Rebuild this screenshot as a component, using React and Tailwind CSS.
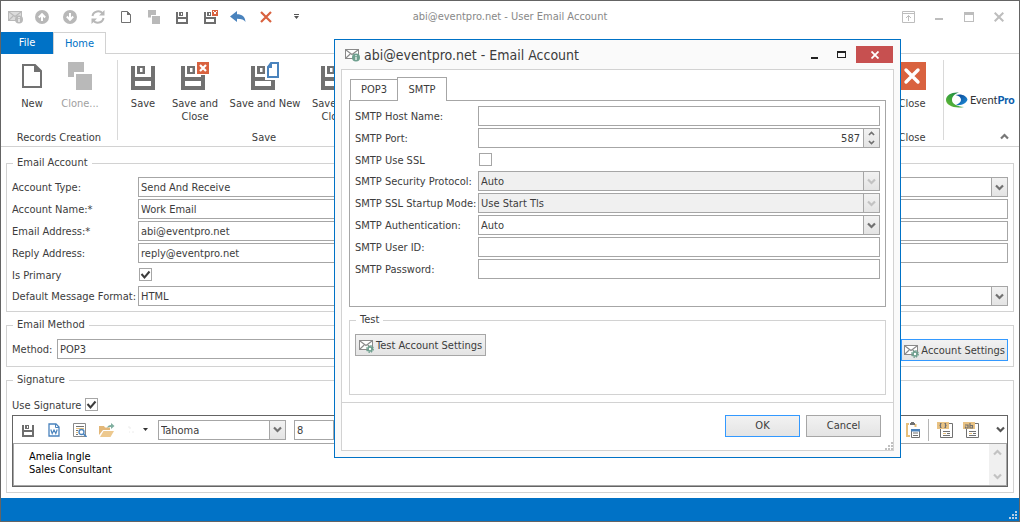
import { useState } from "react";
import { clsx } from "clsx";

/* ---------- icons ---------- */

function Chevron({ up, className }) {
  return (
    <svg viewBox="0 0 9 7" className={clsx("h-[7px] w-[9px]", className)} aria-hidden="true">
      <path
        d={up ? "M1 5.5 4.5 2 8 5.5" : "M1 1.5 4.5 5 8 1.5"}
        fill="none"
        stroke="currentColor"
        strokeWidth="2.2"
      />
    </svg>
  );
}

function MailIcon({ badge = "gear", muted, className }) {
  const line = muted ? "#b9b9b9" : "#8a8a8a";
  const mark = muted ? "#b9b9b9" : "#6fa08f";
  return (
    <svg viewBox="0 0 15 14" className={clsx("h-[14px] w-[15px] shrink-0", className)} aria-hidden="true">
      <rect x="0.5" y="1.5" width="13" height="9" fill={muted ? "#dcdcdc" : "#fff"} stroke={line} />
      <path d="M1 2 7 6.5 13 2M1 10l4.2-4M13 10 8.8 6" fill="none" stroke={line} strokeWidth="1.1" />
      {badge === "gear" ? (
        <>
          <circle cx="11" cy="10" r="3.2" fill="none" stroke={mark} strokeWidth="1.4" strokeDasharray="1.5 1" />
          <circle cx="11" cy="10" r="2" fill="#fff" stroke={mark} strokeWidth="1.6" />
        </>
      ) : (
        <>
          <circle cx="11" cy="9.5" r="4" fill={mark} />
          <path d="M11 7v1.2M11 9v3" stroke="#fff" strokeWidth="1.2" />
        </>
      )}
    </svg>
  );
}

function RoundArrow({ down }) {
  return (
    <svg viewBox="0 0 14 14" className="size-[14px]" aria-hidden="true">
      <circle cx="7" cy="7" r="7" fill="#b8b8b8" />
      <path
        d={down ? "M7 3v5.5M3.8 6.5 7 9.8l3.2-3.3" : "M7 11V5.5M3.8 7.5 7 4.2l3.2 3.3"}
        fill="none"
        stroke="#fff"
        strokeWidth="2"
      />
    </svg>
  );
}

function RefreshIcon() {
  return (
    <svg viewBox="0 0 14 14" className="size-[14px]" fill="none" stroke="#b8b8b8" strokeWidth="2" aria-hidden="true">
      <path d="M1.5 6A5.6 5.6 0 0 1 11.8 4M12.5 8A5.6 5.6 0 0 1 2.2 10" />
      <path d="M13.5 0v5.5H8zM.5 14V8.5H6z" fill="#b8b8b8" stroke="none" />
    </svg>
  );
}

function PageIcon({ className }) {
  return (
    <svg viewBox="0 0 20 24" className={className} aria-hidden="true">
      <path d="M1 1h12l6 6v16H1z" fill="#fff" stroke="#717171" strokeWidth="2" />
      <path d="M12 1h1l6 6v1h-7z" fill="#717171" />
    </svg>
  );
}

function CloneIcon({ className }) {
  return (
    <svg viewBox="0 0 24 28" className={className} aria-hidden="true">
      <path d="M0 0h16v10H6v5H0z" fill="#b9b9b9" />
      <path d="M8 12h16v16H8z" fill="#b9b9b9" />
    </svg>
  );
}

function SaveIcon({ extra }) {
  return (
    <svg
      viewBox={extra ? "0 0 28 28" : "0 0 24 28"}
      className={extra ? "size-7" : "h-7 w-6"}
      aria-hidden="true"
    >
      <g fill="#717171">
        <path d="M0 4h4v11h16V4h4v24H0zM4 19v5h16v-5z" fillRule="evenodd" />
        <path d="M6 4h8v8H6zM9 6v4h2.5V6z" fillRule="evenodd" />
      </g>
      {extra === "close" && (
        <>
          <path d="M15 0h13v13H15z" fill="#fff" />
          <path d="M16 0h12v12H16z" fill="#d9623f" />
          <path d="m19 3 6 6m0-6-6 6" stroke="#fff" strokeWidth="2.2" />
        </>
      )}
      {extra === "new" && (
        <>
          <path d="M14 0h14v18H14z" fill="#fff" />
          <path d="M20 1h7v14H17V5z" fill="#fff" stroke="#4a83bd" strokeWidth="2" />
          <path d="M16 5l4-4h1v5h-5z" fill="#4a83bd" />
        </>
      )}
    </svg>
  );
}

function SmallSaveIcon({ close }) {
  return (
    <svg viewBox="0 0 14 14" className="size-[14px]" shapeRendering="crispEdges" aria-hidden="true">
      <path d="M0 2h2v5h8V2h2v12H0zM2 9v3h8V9z" fill="#6e6e6e" fillRule="evenodd" />
      <path d="M3 2h4v4H3zM5 3v2h1V3z" fill="#6e6e6e" fillRule="evenodd" />
      {close && (
        <>
          <path d="M7 0h7v7H7z" fill="#fff" />
          <path d="M8 0h6v6H8z" fill="#d9623f" />
          <path d="m9.5 1.5 3 3m0-3-3 3" stroke="#fff" />
        </>
      )}
    </svg>
  );
}

function SizeGrip({ className }) {
  return (
    <svg viewBox="0 0 8 8" className={clsx("size-2", className)} shapeRendering="crispEdges" aria-hidden="true">
      <path d="M6 0h2v2H6zM3 3h2v2H3zM6 3h2v2H6zM0 6h2v2H0zM3 6h2v2H3zM6 6h2v2H6z" fill="currentColor" />
    </svg>
  );
}

function EventProMark() {
  return (
    <svg viewBox="0 0 22 16" className="h-4 w-[22px] shrink-0" aria-hidden="true">
      <defs>
        <linearGradient id="markGreen" x1="0" y1="1" x2="1" y2="0">
          <stop offset="0" stopColor="#6cbd34" />
          <stop offset="0.6" stopColor="#2c9a3f" />
          <stop offset="1" stopColor="#0d6b4f" />
        </linearGradient>
        <linearGradient id="markBlue" x1="0" y1="0" x2="1" y2="1">
          <stop offset="0" stopColor="#0a3f8f" />
          <stop offset="1" stopColor="#1e93dd" />
        </linearGradient>
      </defs>
      <path d="M13 .5C6-.3 0 3 0 8c0 5 8 9 18 7C11 14.5 6 12 6 8c0-3.600 2.500-6 7-7.500z" fill="url(#markGreen)" />
      <path d="M9.5 3C16 1.300 20.500 4 21.500 7.500 20.500 11 16 13.800 10 13c3.500-1.500 5-3.300 5-5.300C15 5.500 13 3.800 9.500 3z" fill="url(#markBlue)" />
    </svg>
  );
}

/* ---------- form parts ---------- */

const boxBorder = "border border-[#a6a6a6]";
const buttonFace = "bg-linear-to-b from-[#f2f2f2] to-[#e4e4e4]";

function TextField({ id, className, ...props }) {
  return (
    <input
      id={id}
      className={clsx("h-5 min-w-0 flex-1 bg-white px-[2px] outline-none", boxBorder, className)}
      {...props}
    />
  );
}

function SelectField({ id, options, disabled, className, ...props }) {
  return (
    <div className={clsx("relative h-5 min-w-0", boxBorder, disabled ? "bg-[#f0f0f0]" : "bg-white", className)}>
      <select
        id={id}
        disabled={disabled}
        className="block h-full w-full appearance-none pt-[2px] pr-5 pl-[2px] opacity-100 outline-none"
        {...props}
      >
        {options.map((o) => (
          <option key={o}>{o}</option>
        ))}
      </select>
      <span
        className={clsx(
          "pointer-events-none absolute inset-y-0 right-0 flex w-4 items-center justify-center border-l border-[#a6a6a6]",
          buttonFace,
          disabled ? "text-[#c2c2c2]" : "text-[#717171]"
        )}
      >
        <Chevron />
      </span>
    </div>
  );
}

function CheckBox({ id, ...props }) {
  return (
    <span className="grid">
      <input
        id={id}
        type="checkbox"
        className={clsx("peer col-start-1 row-start-1 size-[13px] appearance-none bg-white", boxBorder)}
        {...props}
      />
      <svg
        viewBox="0 0 13 13"
        className="pointer-events-none invisible col-start-1 row-start-1 size-[13px] peer-checked:visible"
        aria-hidden="true"
      >
        <path d="m2.5 6 3 3.500 5-6" fill="none" stroke="#3c3c3c" strokeWidth="2" />
      </svg>
    </span>
  );
}

function Row({ label, htmlFor, labelWidth, height = "h-5", children, className }) {
  return (
    <div className={clsx("flex items-center", height, className)}>
      <label htmlFor={htmlFor} className={clsx("shrink-0 pt-[2px] whitespace-nowrap", labelWidth)}>
        {label}
      </label>
      {children}
    </div>
  );
}

function Group({ title, children, bottom = "pb-[5px]", className }) {
  return (
    <fieldset className={clsx("min-w-0 border border-[#d2d2d2] px-[5px]", bottom, className)}>
      <legend className="ml-px px-1 leading-4">{title}</legend>
      <div className="pt-[6px]">{children}</div>
    </fieldset>
  );
}

/* ---------- title bar and ribbon ---------- */

const quickActions = [
  { name: "Email account", icon: <MailIcon badge="info" muted />, gap: "mr-3" },
  { name: "Previous", icon: <RoundArrow />, gap: "mr-[14px]" },
  { name: "Next", icon: <RoundArrow down />, gap: "mr-[14px]" },
  { name: "Refresh", icon: <RefreshIcon />, gap: "mr-4" },
  { name: "New", icon: <PageIcon className="h-3 w-[10px]" />, gap: "mr-[17px]" },
  { name: "Clone", icon: <CloneIcon className="h-[14px] w-3" />, gap: "mr-4" },
  { name: "Save", icon: <SmallSaveIcon />, gap: "mr-[14px]" },
  { name: "Save and close", icon: <SmallSaveIcon close />, gap: "mr-3" },
  {
    name: "Undo",
    icon: (
      <svg viewBox="0 0 16 12" className="h-3 w-4" aria-hidden="true">
        <path d="M0 5.500 7 0v3.300c5 0 8 2 8.500 7.700C14 8.500 11.500 7.700 7 7.700V11z" fill="#4a83bd" />
      </svg>
    ),
    gap: "mr-[14px]",
  },
  {
    name: "Delete",
    icon: (
      <svg viewBox="0 0 12 12" className="size-3" aria-hidden="true">
        <path d="m1 1 10 10M11 1 1 11" stroke="#d9623f" strokeWidth="2.2" />
      </svg>
    ),
    gap: "mr-[22px]",
  },
  {
    name: "Customize",
    icon: (
      <svg viewBox="0 0 5 5" className="size-[5px]" aria-hidden="true">
        <path d="M0 0h5v1H0zM0 2h5L2.500 5z" fill="#555" />
      </svg>
    ),
  },
];

function TitleBar() {
  return (
    <header className="relative flex h-[31px] items-center justify-between pr-[15px] pl-[7px]">
      <div className="flex items-center">
        {quickActions.map((a) => (
          <button key={a.name} type="button" aria-label={a.name} className={a.gap}>
            {a.icon}
          </button>
        ))}
      </div>
      <h1 className="pointer-events-none absolute inset-x-0 top-2 text-center text-[#888]">
        abi@eventpro.net - User Email Account
      </h1>
      <div className="flex items-center text-[#bdbdbd]">
        <button type="button" aria-label="Collapse ribbon" className="mr-5">
          <svg viewBox="0 0 13 12" className="h-3 w-[13px]" fill="none" stroke="currentColor" aria-hidden="true">
            <path d="M.5.500h12v11H.5zM.5 2.500h12M6.500 10V4.500M4 7l2.500-2.500L9 7" />
          </svg>
        </button>
        <button type="button" aria-label="Minimize" className="mr-[21px]">
          <svg viewBox="0 0 8 12" className="h-3 w-2" aria-hidden="true">
            <path d="M0 7h8v2H0z" fill="currentColor" />
          </svg>
        </button>
        <button type="button" aria-label="Maximize" className="mr-5">
          <svg viewBox="0 0 10 10" className="size-[10px]" aria-hidden="true">
            <path d="M0 0h10v10H0zM1 3v6h8V3z" fill="currentColor" fillRule="evenodd" />
          </svg>
        </button>
        <button type="button" aria-label="Close window">
          <svg viewBox="0 0 10 10" className="size-[10px]" aria-hidden="true">
            <path d="m.7.700 8.600 8.600M9.300.700.700 9.300" stroke="currentColor" strokeWidth="2" />
          </svg>
        </button>
      </div>
    </header>
  );
}

function RibbonButton({ icon, label, disabled, className }) {
  return (
    <button
      type="button"
      disabled={disabled}
      className={clsx("flex flex-col items-center leading-[13px]", disabled && "text-[#a0a0a0]", className)}
    >
      <span className="mb-[7px] flex h-7 items-center">{icon}</span>
      {label}
    </button>
  );
}

function RibbonGroup({ caption, children, className }) {
  return (
    <section className={clsx("flex shrink-0 flex-col justify-between pt-[2px]", className)}>
      <div className="flex items-start">{children}</div>
      <h2 className="text-center leading-4">{caption}</h2>
    </section>
  );
}

function Divider() {
  return <span className="h-20 w-px shrink-0 bg-[#d9d9d9]" />;
}

function Ribbon() {
  return (
    <div>
      <nav className="flex h-[22px]">
        <button type="button" className="h-full w-[52px] bg-[#0072c6] text-white">
          File
        </button>
        <button type="button" className="w-[53px] border border-b-0 border-[#d2d2d2] text-[#0072c6]">
          Home
        </button>
        <span className="flex-1 border-b border-[#d2d2d2]" />
      </nav>
      <div className="flex h-[93px] border-b border-[#d2d2d2] pt-[6px]">
        <RibbonGroup caption="Records Creation" className="w-[116px]">
          <RibbonButton label="New" icon={<PageIcon className="h-6 w-5" />} className="ml-[7px] w-12" />
          <RibbonButton
            label="Clone..."
            disabled
            icon={<CloneIcon className="h-7 w-6" />}
            className="w-12"
          />
        </RibbonGroup>
        <Divider />
        <RibbonGroup caption="Save" className="w-[292px]">
          <RibbonButton label="Save" icon={<SaveIcon />} className="ml-[5px] w-10" />
          <RibbonButton
            label={<>Save and<br />Close</>}
            icon={<SaveIcon extra="close" />}
            className="ml-1 w-14"
          />
          <RibbonButton label="Save and New" icon={<SaveIcon extra="new" />} className="w-[84px]" />
          <RibbonButton
            label={<>Save and<br />Close</>}
            icon={<SaveIcon extra="close" />}
            className="w-14"
          />
        </RibbonGroup>
        <div className="flex-1" />
        <RibbonGroup caption="Close" className="w-[62px]">
          <RibbonButton
            label="Close"
            icon={
              <svg viewBox="0 0 28 28" className="size-7" aria-hidden="true">
                <path d="M0 0h28v28H0z" fill="#d9623f" />
                <path d="m8 8 12 12M20 8 8 20" stroke="#fff" strokeWidth="3.4" strokeLinecap="round" />
              </svg>
            }
            className="mx-auto"
          />
        </RibbonGroup>
        <Divider />
        <div className="flex w-[75px] flex-col justify-between pt-8 pb-[6px] pl-[2px]">
          <a href="#eventpro" className="flex items-center gap-[2px] font-['Lato',sans-serif] text-[#333]">
            <EventProMark />
            <span>
              Event<b className="font-black text-[#0a5cab]">Pro</b>
            </span>
          </a>
          <button type="button" aria-label="Collapse" className="mr-[10px] self-end text-[#777]">
            <Chevron up />
          </button>
        </div>
      </div>
    </div>
  );
}

/* ---------- signature editor ---------- */

function EditorToolbar() {
  return (
    <div className="flex h-7 items-center border-b border-[#a6a6a6]">
      <button type="button" aria-label="Save" className="ml-[9px]">
        <SmallSaveIcon />
      </button>
      <button type="button" aria-label="Export to Word" className="ml-3">
        <svg viewBox="0 0 12 14" className="h-[14px] w-3" aria-hidden="true">
          <path d="M1 1h7l3 3v9H1z" fill="#fff" stroke="#4a83bd" strokeWidth="1.3" />
          <path d="M7.500 1v3.500H11" fill="none" stroke="#4a83bd" />
          <path d="m2.800 6.500 1.400 4L6 7l1.800 3.500 1.400-4" fill="none" stroke="#4a83bd" strokeWidth="1.2" />
        </svg>
      </button>
      <button type="button" aria-label="Preview" className="ml-[13px]">
        <svg viewBox="0 0 14 14" className="size-[14px]" fill="none" aria-hidden="true">
          <path d="M.5.500h12v13H.5z" fill="#fff" stroke="#8a8a8a" />
          <path d="M3 3.500h8M3 7.500h2M3 11.500h2" stroke="#717171" />
          <path d="M3 5.500h8M3 9.500h2" stroke="#e7bf7a" />
          <circle cx="8.5" cy="9" r="2.5" fill="#fff" stroke="#4a83bd" strokeWidth="1.3" />
          <path d="m10.500 11 3 3" stroke="#4a83bd" strokeWidth="1.6" />
        </svg>
      </button>
      <button type="button" aria-label="Open" className="ml-3">
        <svg viewBox="0 0 16 14" className="h-[14px] w-4" aria-hidden="true">
          <path d="M0 3h5l1 1.500h5V7H4l-4 5z" fill="#e3b778" />
          <path d="M4.500 8H15l-3.500 6H1z" fill="#edc98f" />
          <path d="M8 5c.5-2 2-3 4-3V0l3.500 3L12 6V4c-2 0-3 0-4 1z" fill="#7fae9f" />
        </svg>
      </button>
      <button type="button" disabled aria-label="Insert" className="ml-3">
        <svg viewBox="0 0 8 10" className="h-[10px] w-2" aria-hidden="true">
          <path d="M1 2h2v2M2 7h1M5 7h2" fill="none" stroke="#ececec" />
        </svg>
      </button>
      <button type="button" aria-label="More" className="mr-[10px] ml-2">
        <svg viewBox="0 0 5 3" className="h-[3px] w-[5px]" aria-hidden="true">
          <path d="M0 0h5L2.500 3z" fill="#333" />
        </svg>
      </button>
      <SelectField aria-label="Font" options={["Tahoma", "Arial"]} className="w-32" />
      <SelectField aria-label="Font size" options={["8", "9", "10"]} className="ml-2 w-14" />
      <div className="flex-1" />
      <button type="button" aria-label="Paste special">
        <svg viewBox="0 0 16 16" className="size-4" aria-hidden="true">
          <path d="M4 2H2v12h3M10.500 2v3" fill="none" stroke="#e7bf7a" strokeWidth="2" />
          <path d="M5 1h1V0h3v1h1v2H5z" fill="#717171" />
          <path d="M6.500 8v7.500h8V8z" fill="#fff" stroke="#717171" />
          <path d="M6 7h9v2.500H6z" fill="#4a83bd" />
          <path d="M8 11h5M8 13.500h5" stroke="#717171" />
        </svg>
      </button>
      <span className="mr-2 ml-[7px] h-[22px] w-px bg-[#b5b5b5]" />
      {["{}", "ab"].map((mark) => (
        <button key={mark} type="button" aria-label="Field codes" className="mr-2">
          <svg viewBox="0 0 18 18" className="size-[18px]" aria-hidden="true">
            <path d="M3.500 6v10.500h12v-14H11" fill="#fff" stroke="#717171" />
            <path d="M0 1h12v7H0z" fill="#e9c283" />
            {mark === "{}" ? (
              <path d="M4.500 2.500h-1v4h1M2.500 4.500h1M7.500 2.500h1v4h-1M8.500 4.500h1" fill="none" stroke="#717171" strokeWidth="1.2" />
            ) : (
              <path d="M2 4h3v3H2.500V5.500M7 2v5h2.500V4.500H7" fill="none" stroke="#717171" strokeWidth="1.2" />
            )}
            <path d="M6 10.500h7M10 12.500h3M6 14.500h7" stroke="#717171" />
            <path d="M6 12.500h3" stroke="#e7bf7a" />
          </svg>
        </button>
      ))}
      <button type="button" aria-label="More tools" className="mr-[2px] ml-[7px] text-[#555]">
        <Chevron />
      </button>
    </div>
  );
}

/* ---------- SMTP dialog ---------- */

function EmailAccountDialog() {
  const [tab, setTab] = useState("SMTP");
  const [port, setPort] = useState(587);
  const wide = "w-[123px]";

  return (
    <div
      role="dialog"
      aria-label="Email Account"
      className="absolute top-[38px] right-[118px] left-[333px] border border-[#0072c6] bg-[#fafafa] px-[6px] pb-[6px]"
    >
      <div className="flex h-[29px] items-center">
        <MailIcon badge="info" className="mr-1 ml-1" />
        <h2 className="flex-1 pt-px text-[14px] leading-5">abi@eventpro.net - Email Account</h2>
        <button type="button" aria-label="Minimize dialog" className="mr-[19px]">
          <svg viewBox="0 0 7 8" className="h-2 w-[7px]" aria-hidden="true">
            <path d="M0 6h7v2H0z" fill="#222" />
          </svg>
        </button>
        <button type="button" aria-label="Maximize dialog" className="mr-[10px]">
          <svg viewBox="0 0 9 7" className="h-[7px] w-[9px]" aria-hidden="true">
            <path d="M0 0h9v7H0zM1 2v4h7V2z" fill="#222" fillRule="evenodd" />
          </svg>
        </button>
        <button
          type="button"
          aria-label="Close dialog"
          className="mr-px flex h-[17px] w-[37px] items-center justify-center bg-[#c75050]"
        >
          <svg viewBox="0 0 8 8" className="size-2" aria-hidden="true">
            <path d="m.5.500 7 7M7.500.500l-7 7" stroke="#fff" strokeWidth="1.8" />
          </svg>
        </button>
      </div>

      <div className="border border-[#d2d2d2] bg-white">
        <div className="p-[7px]">
          <div role="tablist" className="flex items-end pl-px">
            {["POP3", "SMTP"].map((t) => (
              <button
                key={t}
                type="button"
                role="tab"
                aria-selected={tab === t}
                onClick={() => setTab(t)}
                className={clsx(
                  "border border-b-0 border-[#a6a6a6] bg-white",
                  tab === t ? "relative z-10 -mb-px h-6 w-[50px]" : "h-[21px] w-12",
                  t === "SMTP" && "-ml-px"
                )}
              >
                {t}
              </button>
            ))}
          </div>

          <div className="flex flex-col gap-[2px] border border-[#a6a6a6] px-[5px] pt-[5px] pb-[27px]">
            <Row label="SMTP Host Name:" htmlFor="host" labelWidth={wide}>
              <TextField id="host" />
            </Row>
            <Row label="SMTP Port:" htmlFor="port" labelWidth={wide}>
              <div className={clsx("flex h-5 min-w-0 flex-1", boxBorder)}>
                <input
                  id="port"
                  inputMode="numeric"
                  value={port}
                  onChange={(e) => setPort(Number(e.target.value) || 0)}
                  className="min-w-0 flex-1 px-[3px] pt-px text-right outline-none"
                />
                <div className={clsx("flex w-4 flex-col border-l border-[#a6a6a6] text-[#717171]", buttonFace)}>
                  <button
                    type="button"
                    aria-label="Increase port"
                    onClick={() => setPort(port + 1)}
                    className="flex flex-1 items-center justify-center"
                  >
                    <Chevron up className="scale-75" />
                  </button>
                  <button
                    type="button"
                    aria-label="Decrease port"
                    onClick={() => setPort(port - 1)}
                    className="flex flex-1 items-center justify-center"
                  >
                    <Chevron className="scale-75" />
                  </button>
                </div>
              </div>
            </Row>
            <Row label="SMTP Use SSL" htmlFor="ssl" labelWidth="w-[124px]" height="h-[19px]">
              <CheckBox id="ssl" />
            </Row>
            <Row label="SMTP Security Protocol:" htmlFor="protocol" labelWidth={wide}>
              <SelectField id="protocol" disabled options={["Auto"]} className="flex-1" />
            </Row>
            <Row label="SMTP SSL Startup Mode:" htmlFor="startup" labelWidth={wide}>
              <SelectField id="startup" disabled options={["Use Start Tls"]} className="flex-1" />
            </Row>
            <Row label="SMTP Authentication:" htmlFor="auth" labelWidth={wide}>
              <SelectField id="auth" options={["Auto", "None"]} className="flex-1" />
            </Row>
            <Row label="SMTP User ID:" htmlFor="userId" labelWidth={wide}>
              <TextField id="userId" />
            </Row>
            <Row label="SMTP Password:" htmlFor="password" labelWidth={wide}>
              <TextField id="password" type="password" />
            </Row>
          </div>

          <Group title="Test" className="mt-[5px]" bottom="pb-[38px]">
            <button
              type="button"
              className={clsx("flex h-[22px] items-center gap-[2px] px-[3px] pt-px", boxBorder, buttonFace)}
            >
              <MailIcon />
              Test Account Settings
            </button>
          </Group>
        </div>

        <div className="relative flex justify-end gap-[6px] border-t border-[#d2d2d2] px-3 pt-3 pb-[13px]">
          <button type="button" className={clsx("h-[22px] w-[75px] border border-[#3399ff]", buttonFace)}>
            OK
          </button>
          <button type="button" className={clsx("h-[22px] w-[75px]", boxBorder, buttonFace)}>
            Cancel
          </button>
          <SizeGrip className="absolute right-0 bottom-0 text-[#c0c0c0]" />
        </div>
      </div>
    </div>
  );
}

/* ---------- page ---------- */

export default function App() {
  const label = "w-[126px]";

  return (
    <div className="relative flex min-h-screen flex-col border border-[#646464] bg-white font-['DejaVu_Sans_Condensed','DejaVu_Sans',sans-serif] text-[11px] leading-4 text-[#3c3c3c]">
      <TitleBar />
      <Ribbon />

      <main className="flex flex-col gap-[5px] px-[5px] pt-2 pb-[5px]">
        <Group title="Email Account">
          <div className="flex flex-col gap-[2px]">
            <Row label="Account Type:" htmlFor="accountType" labelWidth={label}>
              <SelectField id="accountType" options={["Send And Receive", "Send", "Receive"]} className="flex-1" />
            </Row>
            <Row label="Account Name:*" htmlFor="accountName" labelWidth={label}>
              <TextField id="accountName" defaultValue="Work Email" />
            </Row>
            <Row label="Email Address:*" htmlFor="emailAddress" labelWidth={label}>
              <TextField id="emailAddress" defaultValue="abi@eventpro.net" />
            </Row>
            <Row label="Reply Address:" htmlFor="replyAddress" labelWidth={label}>
              <TextField id="replyAddress" defaultValue="reply@eventpro.net" />
            </Row>
            <Row label="Is Primary" htmlFor="isPrimary" labelWidth="w-[127px]" height="h-[19px]">
              <CheckBox id="isPrimary" defaultChecked />
            </Row>
            <Row label="Default Message Format:" htmlFor="format" labelWidth={label}>
              <SelectField id="format" options={["HTML", "Plain Text"]} className="flex-1" />
            </Row>
          </div>
        </Group>

        <Group title="Email Method">
          <div className="flex h-[22px] items-start">
            <Row label="Method:" htmlFor="method" labelWidth="w-[45px]" className="mr-1 flex-1">
              <SelectField id="method" options={["POP3", "IMAP"]} className="flex-1" />
            </Row>
            <button
              type="button"
              className={clsx("flex h-[22px] items-center gap-[2px] border border-[#3399ff] px-[2px] pt-px", buttonFace)}
            >
              <MailIcon />
              Account Settings
            </button>
          </div>
        </Group>

        <Group title="Signature">
          <Row label="Use Signature" htmlFor="useSignature" labelWidth="w-[73px]" height="h-[21px]">
            <CheckBox id="useSignature" defaultChecked />
          </Row>
          <div className="border border-[#646464]">
            <EditorToolbar />
            <div className="flex h-[42px] border-x border-b border-[#a6a6a6]">
              <textarea
                aria-label="Signature text"
                defaultValue={"Amelia Ingle\nSales Consultant"}
                className="flex-1 resize-none overflow-hidden pt-[6px] pl-[15px] leading-[13px] text-black outline-none"
              />
              <div className="flex w-[17px] flex-col items-center justify-between bg-[#f0f0f0] py-[5px] text-[#c2c2c2]">
                <Chevron up />
                <Chevron />
              </div>
            </div>
          </div>
        </Group>
      </main>

      <footer className="mt-auto flex h-[23px] items-end justify-end bg-[#0072c6] p-[2px]">
        <SizeGrip className="text-[#b9cfe4]" />
      </footer>

      <EmailAccountDialog />
    </div>
  );
}
